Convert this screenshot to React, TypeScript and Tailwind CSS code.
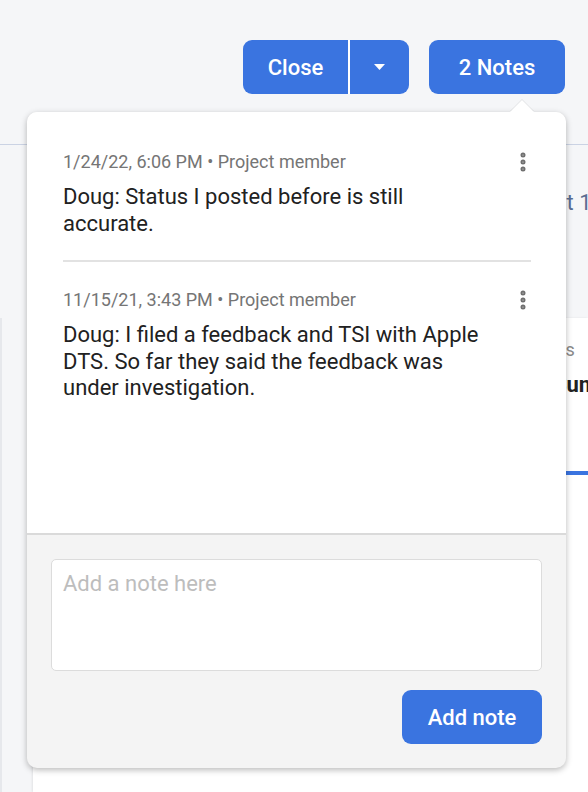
import { EllipsisVertical } from "lucide-react";

const notes = [
  {
    id: 1,
    when: "1/24/22, 6:06 PM",
    role: "Project member",
    text: "Doug: Status I posted before is still accurate.",
  },
  {
    id: 2,
    when: "11/15/21, 3:43 PM",
    role: "Project member",
    text: "Doug: I filed a feedback and TSI with Apple DTS. So far they said the feedback was under investigation.",
  },
];

const NoteItem = ({ note, last }: { note: any; last: boolean }) => {
  return (
    <div className={last ? "" : "border-b-2 border-[#e2e2e2] pb-[23px] mb-[27px]"}>
      <div className="flex items-start justify-between">
        <p className="text-[18px] leading-[22px] text-[#757575]">
          {note.when} • {note.role}
        </p>
        <button className="mr-[-4px] mt-[-1px] text-[#6f6f6f]">
          <EllipsisVertical size={24} strokeWidth={3} />
        </button>
      </div>
      <p className="mt-[10px] w-[424px] text-[22px] leading-[26.5px] text-[#212121]">
        {note.text}
      </p>
    </div>
  );
};

const App = () => {
  return (
    <div
      className="relative h-[792px] w-[588px] overflow-hidden bg-[#f5f6f8]"
      style={{ fontFamily: "Roboto, 'Liberation Sans', sans-serif" }}
    >
      {/* top bar */}
      <div className="flex h-[145px] items-start justify-end gap-5 border-b border-[#cbd3e4] pr-[23px] pt-[40px]">
        <div className="flex h-[54px] overflow-hidden rounded-[9px] bg-[#3a74e0] text-white">
          <button className="w-[105px] text-[22px] font-medium">Close</button>
          <div className="w-[2px] bg-white" />
          <button className="flex w-[59px] items-center justify-center">
            <svg width="11" height="6" viewBox="0 0 11 6">
              <path d="M0 0 L11 0 L5.5 6 Z" fill="white" />
            </svg>
          </button>
        </div>
        <button className="h-[54px] w-[136px] rounded-[9px] bg-[#3a74e0] text-[22px] font-medium text-white">
          2 Notes
        </button>
      </div>

      {/* page content behind the popover */}
      <div className="flex h-[173px] justify-end pt-[45px]">
        <p className="mr-[-16px] whitespace-nowrap text-[22px] leading-[26px] text-[#5a6d92]">Last updated at 11</p>
      </div>
      <div className="flex h-[474px]">
        <div className="w-[33px] shrink-0 border-l-2 border-[#e6e8ec]" />
        <div className="min-w-0 flex-1 bg-white pl-[489px] pt-[21px] shadow-[-1px_0_2px_rgba(0,0,0,0.08)]">
          <p className="whitespace-nowrap text-[18px] leading-[22px] text-[#8a8a8a]">Labels</p>
          <p className="ml-[31px] mt-[11px] whitespace-nowrap text-[22px] font-bold leading-[26px] text-[#222]">
            Summary
          </p>
          <div className="ml-[-20px] mt-[73px] h-[4px] w-[200px] bg-[#3a74e0]" />
        </div>
      </div>

      {/* notes popover */}
      <div className="absolute left-[27px] top-[112px] w-[539px] rounded-[10px] bg-[#f4f4f4] shadow-[0_2px_6px_rgba(0,0,0,0.28)]">
        <div className="absolute right-[32px] top-[-12px] h-0 w-0 border-x-[12px] border-b-[12px] border-x-transparent border-b-white drop-shadow-[0_-1px_0_rgba(0,0,0,0.08)]" />
        <div className="h-[421px] rounded-t-[10px] bg-white pl-[36px] pr-[35px] pt-[39px]">
          {notes.map((note, i) => (
            <NoteItem key={note.id} note={note} last={i === notes.length - 1} />
          ))}
        </div>
        <div className="border-t-2 border-[#dadada] px-[24px] pb-[24px] pt-[24px]">
          <textarea
            placeholder="Add a note here"
            className="block h-[112px] w-full resize-none rounded-[5px] border border-[#dcdcdc] bg-white px-[11px] py-[11px] text-[22px] leading-[26px] text-[#222] outline-none placeholder:text-[#bdbdbd]"
          />
          <div className="mt-[19px] flex justify-end">
            <button className="h-[54px] w-[140px] rounded-[9px] bg-[#3a74e0] text-[22px] font-medium text-white">
              Add note
            </button>
          </div>
        </div>
      </div>
    </div>
  );
};

export default App;
